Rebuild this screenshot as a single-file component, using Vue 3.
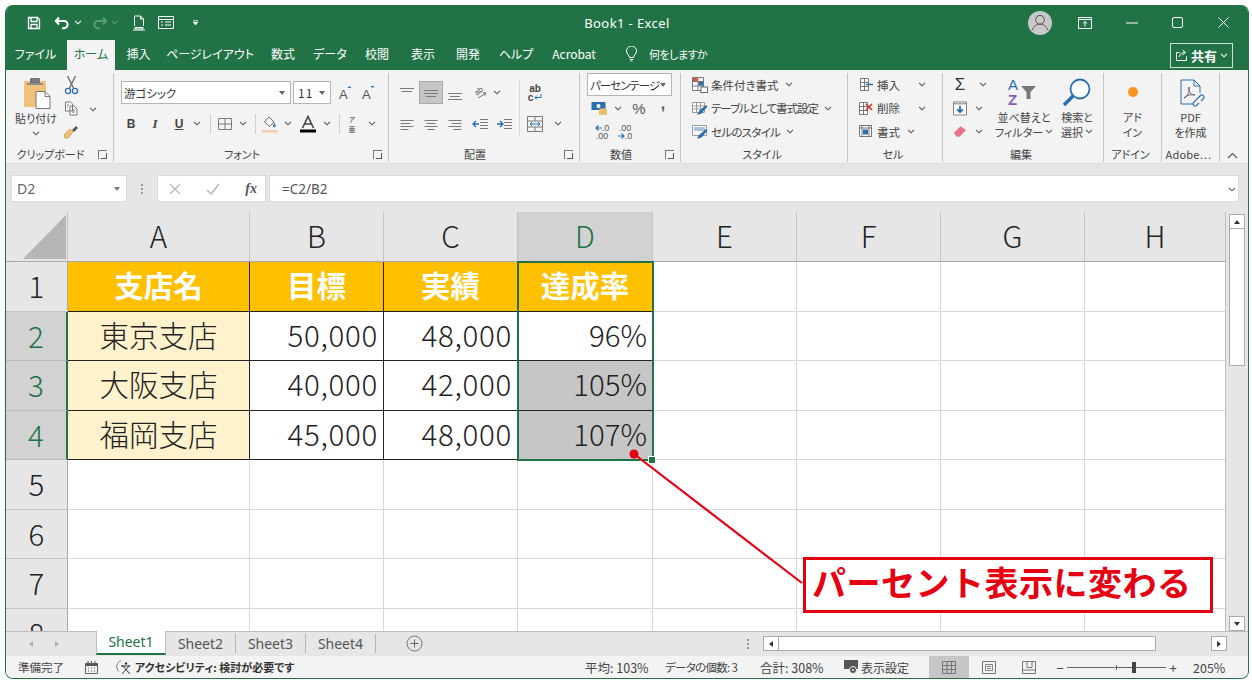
<script setup>
import { h } from 'vue'

const Ic = (p) =>
  h('svg', { width: p.s || 16, height: p.s || 16, viewBox: `0 0 ${p.s || 16} ${p.s || 16}`, style: 'display:block' }, [
    h('path', { d: p.d, fill: p.f || 'none', stroke: p.c || '#7a7a7a', 'stroke-width': p.w || 1 })
  ])
Ic.inheritAttrs = false
const Chev = (p) =>
  h('svg', { width: 8, height: 5, viewBox: '0 0 8 5', style: 'display:block' }, [
    h('path', { d: 'M1 .8l3 3 3-3', fill: 'none', stroke: p.c || '#555', 'stroke-width': 1.1 })
  ])

const tabs = [
  { t: 'ファイル', w: 61 },
  { t: 'ホーム', w: 48, on: true },
  { t: '挿入', w: 47 },
  { t: 'ページレイアウト', w: 96 },
  { t: '数式', w: 50 },
  { t: 'データ', w: 44 },
  { t: '校閲', w: 50 },
  { t: '表示', w: 42 },
  { t: '開発', w: 48 },
  { t: 'ヘルプ', w: 48 },
  { t: 'Acrobat', w: 68 }
]
const cols = ['A', 'B', 'C', 'D', 'E', 'F', 'G', 'H']
const data = {
  1: ['支店名', '目標', '実績', '達成率'],
  2: ['東京支店', '50,000', '48,000', '96%'],
  3: ['大阪支店', '40,000', '42,000', '105%'],
  4: ['福岡支店', '45,000', '48,000', '107%']
}
const rows = [1, 2, 3, 4, 5, 6, 7, 8]
function cellClass(r, c) {
  const inT = r <= 4 && c <= 3
  return {
    tb: inT,
    head: r === 1 && c <= 3,
    name: r > 1 && r <= 4 && c === 0,
    num: r > 1 && r <= 4 && c > 0 && c <= 3,
    wide: r > 1 && r <= 4 && (c === 1 || c === 2),
    dark: (r === 3 || r === 4) && c === 3
  }
}
</script>

<template>
  <div class="page">
    <div class="win">
      <!-- title bar -->
      <div class="title">
        <div class="qat">
          <span class="c w20"><svg width="14" height="14" viewBox="0 0 14 14"><path d="M1.500 1.500h9l2 2v9h-11zM4 1.500v4h6v-4M4 12.500v-4h6v4" fill="none" stroke="#fff" stroke-width="1.300"/></svg></span>
          <span class="w8"></span>
          <span class="c w20"><svg width="16" height="14" viewBox="0 0 16 14"><path d="M5 1.500L1.800 5 5 8.500M2 5h8a3.600 3.600 0 0 1 0 7.200H8" fill="none" stroke="#fff" stroke-width="2"/></svg></span>
          <span class="c w12"><Chev c="#fff" /></span>
          <span class="w6"></span>
          <span class="c w20"><svg width="16" height="14" viewBox="0 0 16 14"><path d="M11 1.500L14.200 5 11 8.500M14 5H6a3.600 3.600 0 0 0 0 7.200h2" fill="none" stroke="#5d9a78" stroke-width="2"/></svg></span>
          <span class="c w10"><Chev c="#5d9a78" /></span>
          <span class="c w38"><svg width="14" height="16" viewBox="0 0 14 16"><path d="M2.500 11V1h6l3 3v7M8.500 1v3h3M1 15h12M3 12.500h8v1.500H3z" fill="none" stroke="#fff"/></svg></span>
          <span class="c w16"><svg width="16" height="13" viewBox="0 0 16 13"><path d="M.500.500h15v12H.500zM.500 3.500h15M3 6h2M3 9h2M7 6h6M7 9h6" fill="none" stroke="#fff"/></svg></span>
          <span class="c w42"><svg width="7" height="7" viewBox="0 0 7 7"><path d="M1 1.500h5M1 3l2.500 3L6 3z" fill="#fff" stroke="#fff" stroke-width=".6"/></svg></span>
        </div>
        <div class="ttl">Book1  -  Excel</div>
        <div class="winbtns">
          <span class="avatar"><svg width="24" height="24" viewBox="0 0 24 24"><circle cx="12" cy="8.800" r="4.400" fill="none" stroke="#555"/><path d="M4.500 19c1-4 4-5.800 7.500-5.800s6.500 1.800 7.500 5.800" fill="none" stroke="#555"/></svg></span>
          <span class="c w46"><svg width="14" height="12" viewBox="0 0 14 12"><path d="M.500.500h13v11H.500zM.500 2.500h13M7 9.500V4.500M5 6.500l2-2 2 2" fill="none" stroke="#fff"/></svg></span>
          <span class="c w48"><svg width="12" height="2" viewBox="0 0 12 2"><path d="M0 1h12" stroke="#fff"/></svg></span>
          <span class="c w42"><svg width="11" height="11" viewBox="0 0 11 11"><rect x=".5" y=".5" width="10" height="10" rx="1.500" fill="none" stroke="#fff"/></svg></span>
          <span class="c w50"><svg width="11" height="11" viewBox="0 0 11 11"><path d="M.500.500l10 10M10.500.500l-10 10" stroke="#fff"/></svg></span>
        </div>
      </div>

      <!-- tabs -->
      <div class="tabs">
        <span v-for="tb in tabs" :key="tb.t" class="tab" :class="{ on: tb.on }" :style="{ width: tb.w + 'px' }">{{ tb.t }}</span>
        <span class="search">
          <svg width="13" height="16" viewBox="0 0 13 16"><path d="M4.500 11.500c0-2-3-3.500-3-6.500a5 5 0 0 1 10 0c0 3-3 4.500-3 6.500zM4.800 13.500h3.400M5.500 15h2" fill="none" stroke="#fff"/></svg>
          <span class="srch">何をしますか</span>
        </span>
        <span class="share">
          <svg width="13" height="13" viewBox="0 0 13 13"><path d="M4.500 3.500H1.500v8h10v-4M4 8c1-3 3-4.500 5.500-4.500M7.500 1l3 2.500-3 2.500" fill="none" stroke="#fff"/></svg>
          <b>共有</b>
          <Chev c="#fff" />
        </span>
      </div>

      <!-- ribbon -->
      <div class="ribbon">
        <!-- clipboard -->
        <section class="grp g-clip">
          <div class="body flexrow">
            <div class="paste">
              <svg class="pasteic" width="30" height="34" viewBox="0 0 30 34"><rect x="1" y="5" width="22" height="26" rx="1" fill="#eec27a"/><rect x="7" y="2" width="10" height="6" rx="1" fill="#777"/><rect x="4" y="7" width="16" height="2" fill="#8a8a8a"/><path d="M13 15.500h9l5 5v12H13z" fill="#fff" stroke="#777"/><path d="M22 15.500v5h5" fill="none" stroke="#777"/></svg>
              <span class="tiny">貼り付け</span>
              <span class="chevline"><Chev /></span>
            </div>
            <div class="smcol">
              <span class="rowc"><svg width="15" height="20" viewBox="0 0 15 20"><path d="M3.500 1l6 12M11.500 1l-6 12" stroke="#666" stroke-width="1.300" fill="none"/><circle cx="4" cy="16" r="2.600" fill="none" stroke="#2a6fb0" stroke-width="1.300"/><circle cx="11" cy="16" r="2.600" fill="none" stroke="#2a6fb0" stroke-width="1.300"/></svg></span>
              <span class="rowc"><svg width="14" height="15" viewBox="0 0 14 15"><path d="M1.500 1h5l2 2v7h-7zM6 5h4l3 3v6H6zM3 4h2M3 6h1M8 9h3M8 11h3" fill="#fff" stroke="#777"/></svg></span>
              <span class="rowc"><svg width="16" height="15" viewBox="0 0 16 15"><path d="M1 11l6-6 3 3-5 6H2z" fill="#eec27a" stroke="#d9a84e"/><path d="M9 6l4-4 2 2-4 4z" fill="#555"/></svg></span>
            </div>
            <span class="c w20"><Chev /></span>
          </div>
          <div class="lab"><span>クリップボード</span><i class="launch"></i></div>
        </section>

        <!-- font -->
        <section class="grp g-font">
          <div class="body two">
            <div class="tr pl7">
              <span class="combo fname">游ゴシック<em></em></span>
              <span class="combo fsize">11<em></em></span>
              <span class="w3"></span>
              <span class="c w23"><svg width="16" height="16" viewBox="0 0 16 16"><text x="1" y="14" font-size="13" font-family="Liberation Sans" fill="#555">A</text><path d="M9.500 3l2-2 2 2z" fill="#2a6fb0"/></svg></span>
              <span class="c w23"><svg width="16" height="16" viewBox="0 0 16 16"><text x="1" y="14" font-size="13" font-family="Liberation Sans" fill="#555">A</text><path d="M9.500 1h4l-2 2z" fill="#2a6fb0"/></svg></span>
            </div>
            <div class="tr pl5">
              <span class="c w24 fb">B</span>
              <span class="c w24 fi">I</span>
              <span class="c w24 fu">U</span>
              <span class="c w12"><Chev /></span>
              <span class="c w14"><i class="vs"></i></span>
              <span class="c w16"><Ic d="M1.500 2.500h13v11h-13zM8 2.500v11M1.500 8h13" /></span>
              <span class="c w20"><Chev /></span>
              <span class="c w4"><i class="vs"></i></span>
              <span class="c w26"><svg width="18" height="18" viewBox="0 0 18 18"><path d="M8 2l5 5-4.500 4.500L3.500 7z" fill="#fff" stroke="#666"/><path d="M13 7.500c1 1.500 1.800 2.500 1.800 3.300a1.300 1.300 0 0 1-2.600 0c0-.8.800-1.800.8-3.300z" fill="#2a6fb0"/><rect x="1" y="15" width="16" height="2.500" fill="#f6c9b0"/></svg></span>
              <span class="c w10"><Chev /></span>
              <span class="c w30"><svg width="18" height="18" viewBox="0 0 18 18"><path d="M3.500 13L9 1.500 14.500 13M5.500 9h7" fill="none" stroke="#444" stroke-width="1.600"/><rect x="1" y="14.500" width="16" height="3" fill="#000"/></svg></span>
              <span class="c w8"><Chev /></span>
              <span class="c w16"><i class="vs"></i></span>
              <span class="c w10 phon"><small>ア</small><small>亜</small></span>
              <span class="c w30"><Chev /></span>
            </div>
          </div>
          <div class="lab"><span>フォント</span><i class="launch"></i></div>
        </section>

        <!-- align -->
        <section class="grp g-align">
          <div class="body two">
            <div class="tr pl6">
              <span class="c w24"><Ic d="M1 3.500h14M3 6.500h10" /></span>
              <span class="c w24 sel"><Ic d="M1 5.500h14M1 8.500h14M3 11.500h10" /></span>
              <span class="c w24"><Ic d="M1 8.500h14M3 11.500h10M1 14.500h14" /></span>
              <span class="c w26"><svg width="18" height="16" viewBox="0 0 18 16"><text x="5" y="10" font-size="8" font-family="Liberation Sans" fill="#555" transform="rotate(-45 7 9)">ab</text><path d="M7 13l8-5M15 8l-3-.5M15 8l-1.500 3" fill="none" stroke="#777"/></svg></span>
              <span class="c w8"><Chev /></span>
              <span class="w19"></span>
              <span class="c w30 wrap"><span>ab</span><span class="wrap2">c<svg width="9" height="8" viewBox="0 0 9 8"><path d="M8 1v3.500H2M4 2.500l-2 2 2 2" fill="none" stroke="#2a6fb0"/></svg></span></span>
            </div>
            <div class="tr pl6">
              <span class="c w24"><Ic d="M1.500 4.500h13M1.500 7.500h10M1.500 10.500h13M1.500 13.500h8" /></span>
              <span class="c w24"><Ic d="M1.500 4.500h13M3.500 7.500h9M1.500 10.500h13M4.500 13.500h7" /></span>
              <span class="c w24"><Ic d="M1.500 4.500h13M4.500 7.500h10M1.500 10.500h13M6.500 13.500h8" /></span>
              <span class="c w25"><svg width="16" height="16" viewBox="0 0 16 16"><path d="M8 3.500h8M8 6.500h8M8 9.500h8M8 12.500h8" stroke="#7a7a7a"/><path d="M7 8H1M4 5L1 8l3 3" fill="none" stroke="#2a6fb0" stroke-width="1.400"/></svg></span>
              <span class="c w24"><svg width="16" height="16" viewBox="0 0 16 16"><path d="M8 3.500h8M8 6.500h8M8 9.500h8M8 12.500h8" stroke="#7a7a7a"/><path d="M1 8h6M4 5l3 3-3 3" fill="none" stroke="#2a6fb0" stroke-width="1.400"/></svg></span>
              <span class="c w4"></span>
              <span class="c w30"><svg width="16" height="16" viewBox="0 0 16 16"><path d="M.500.500h15v15H.500zM.500 5h15M.500 11h15M8 .500V5M8 11v4.500" fill="none" stroke="#7a7a7a"/><path d="M3 8h10M5 6L3 8l2 2M11 6l2 2-2 2" fill="none" stroke="#2a6fb0"/></svg></span>
              <span class="c w16"><Chev /></span>
            </div>
          </div>
          <div class="lab"><span>配置</span><i class="launch"></i></div>
        </section>

        <!-- number -->
        <section class="grp g-num">
          <div class="body">
            <div class="combo nform"><span class="nftext">パーセンテージ</span><em></em></div>
            <div class="nrow">
              <span class="c w24"><svg width="18" height="16" viewBox="0 0 18 16"><rect x=".5" y="1" width="14" height="8" fill="#2a6fb0"/><circle cx="7.500" cy="5" r="2" fill="#fff"/><ellipse cx="12" cy="9" rx="4" ry="1.700" fill="#e8bf6a"/><rect x="8" y="9" width="8" height="5" fill="#e8bf6a"/></svg></span>
              <span class="c w12"><Chev /></span>
              <span class="c w30 pct">%</span>
              <span class="c w18 comma">,</span>
            </div>
            <div class="nrow">
              <span class="c w28 dec"><span class="decl"><svg width="7" height="6" viewBox="0 0 7 6"><path d="M7 3H1M3.500.500L1 3l2.500 2.500" fill="none" stroke="#2a6fb0" stroke-width="1.200"/></svg>.0</span><span class="decl">.00</span></span>
              <span class="c w18 dec"><span class="decl">.00</span><span class="decl"><svg width="7" height="6" viewBox="0 0 7 6"><path d="M0 3h6M3.500.500L6 3 3.500 5.500" fill="none" stroke="#2a6fb0" stroke-width="1.200"/></svg>.0</span></span>
            </div>
          </div>
          <div class="lab"><span>数値</span><i class="launch"></i></div>
        </section>

        <!-- styles -->
        <section class="grp g-style">
          <div class="body">
            <div class="txtrow">
              <svg width="16" height="16" viewBox="0 0 16 16"><path d="M.500.500h11v13h-11zM.500 4.500h11M.500 9h11M6 .500v13" fill="#fff" stroke="#777"/><rect x="1" y="1" width="4.500" height="3.500" fill="#d9534f"/><rect x="6.500" y="5" width="4.500" height="3.500" fill="#2a6fb0"/><rect x="9" y="10" width="6.500" height="5.500" fill="#fff" stroke="#666"/></svg>
              <span>条件付き書式</span><Chev />
            </div>
            <div class="txtrow">
              <svg width="16" height="16" viewBox="0 0 16 16"><path d="M.500 2.500h12v10h-12zM.500 6h12M.500 9h12M4.500 2.500v10M8.500 2.500v10" fill="#fff" stroke="#999"/><path d="M5 15l2-4 7-6 1.500 1.500-6 7z" fill="#2a6fb0"/></svg>
              <span class="ts2">テーブルとして書式設定</span><Chev />
            </div>
            <div class="txtrow">
              <svg width="16" height="16" viewBox="0 0 16 16"><path d="M.500 1.500h14v10H.500z" fill="#fff" stroke="#999"/><rect x="2" y="3" width="11" height="4" fill="#a9c4e2"/><path d="M5 15l2-4 7-6 1.500 1.500-6 7z" fill="#2a6fb0"/></svg>
              <span class="ts3">セルのスタイル</span><Chev />
            </div>
          </div>
          <div class="lab ctr"><span>スタイル</span></div>
        </section>

        <!-- cells -->
        <section class="grp g-cell">
          <div class="body">
            <div class="txtrow cellrow">
              <svg width="15" height="15" viewBox="0 0 15 15"><path d="M2.500 1.500h8v12h-8zM2.500 5.500h8M2.500 9.500h8M6.500 1.500v12" fill="#fff" stroke="#777"/><path d="M8 7.500h7" stroke="#2a6fb0" stroke-width="1.400"/></svg>
              <span class="cellt">挿入</span><span class="sp1"></span><Chev />
            </div>
            <div class="txtrow cellrow">
              <svg width="15" height="15" viewBox="0 0 15 15"><path d="M1.500 1.500h8v12h-8zM1.500 5.500h8M1.500 9.500h8M5.500 1.500v12" fill="#fff" stroke="#777"/><path d="M8 3l6 6M14 3L8 9" stroke="#d9342b" stroke-width="1.600"/></svg>
              <span class="cellt">削除</span><span class="sp1"></span><Chev />
            </div>
            <div class="txtrow cellrow">
              <svg width="15" height="15" viewBox="0 0 15 15"><path d="M1.500 1.500h12v11h-12zM1.500 4h12M4 1.500v11M11 1.500v11" fill="#fff" stroke="#777"/><rect x="5" y="5.500" width="5" height="5" fill="#2a6fb0"/></svg>
              <span class="cellt">書式</span><Chev />
            </div>
          </div>
          <div class="lab ctr"><span>セル</span></div>
        </section>

        <!-- edit -->
        <section class="grp g-edit">
          <div class="body flexrow">
            <div class="editcol">
              <span class="rowc"><span class="c w14 sigma">Σ</span><span class="c w16l"><Chev /></span></span>
              <span class="rowc"><span class="c w14"><svg width="15" height="15" viewBox="0 0 15 15"><path d="M.500.500h14v14H.500z" fill="#fff" stroke="#777"/><path d="M.500 2.500h14" stroke="#777"/><path d="M7.500 4.500v7M4.500 8.500l3 3 3-3" fill="none" stroke="#2a6fb0" stroke-width="2"/></svg></span><span class="c w16s"><Chev /></span></span>
              <span class="rowc"><span class="c w14"><svg width="15" height="13" viewBox="0 0 15 13"><path d="M1 8l7-7 6 4-7 7H4z" fill="#e2758d"/></svg></span><span class="c w16s"><Chev /></span></span>
            </div>
            <div class="bigbtn b-sort">
              <svg width="36" height="30" viewBox="0 0 36 30"><text x="2" y="13" font-size="15" font-family="Liberation Sans" fill="#2a6fb0">A</text><text x="2" y="28" font-size="15" font-family="Liberation Sans" fill="#8e5bb5" font-weight="700">Z</text><path d="M15 9h15l-5.500 6v7h-4v-7z" fill="#777"/></svg>
              <span>並べ替えと</span>
              <span>フィルター <Chev class="inl" /></span>
            </div>
            <div class="bigbtn b-find">
              <svg width="32" height="30" viewBox="0 0 32 30"><circle cx="19" cy="12" r="9.500" fill="#fff" stroke="#2a6fb0" stroke-width="1.800"/><path d="M12 19L3 28" stroke="#2a6fb0" stroke-width="3.500"/></svg>
              <span>検索と</span>
              <span>選択 <Chev class="inl" /></span>
            </div>
          </div>
          <div class="lab ctr"><span>編集</span></div>
        </section>

        <!-- addin -->
        <section class="grp g-add">
          <div class="body">
            <div class="bigbtn">
              <svg width="32" height="30" viewBox="0 0 32 30"><circle cx="16" cy="15" r="5" fill="#f7931e"/></svg>
              <span>アド</span>
              <span>イン</span>
            </div>
          </div>
          <div class="lab ctr"><span>アドイン</span></div>
        </section>

        <!-- adobe -->
        <section class="grp g-pdf">
          <div class="body">
            <div class="bigbtn">
              <svg width="32" height="30" viewBox="0 0 32 30"><path d="M6 14V3h13l6 6v7M6 14v13h12" fill="none" stroke="#2a6fb0"/><path d="M19 3v6h6" fill="none" stroke="#2a6fb0"/><path d="M9 21c3-1 6-6 5-11-1 5 2 8 6 8-3-1-8 0-11 3z" fill="none" stroke="#555" stroke-width=".9"/><path d="M20 24l6-6a2.500 2.500 0 0 1 3 3l-3 3M23 21l-5 5a2.500 2.500 0 0 0 3 3l3-3" fill="none" stroke="#2a6fb0" stroke-width="1.200"/></svg>
              <span>PDF</span>
              <span>を作成</span>
            </div>
          </div>
          <div class="lab ctr"><span class="ado">Adobe⋯</span></div>
        </section>

        <div class="collapse"><svg width="11" height="7" viewBox="0 0 11 7"><path d="M1 6l4.500-4.500L10 6" fill="none" stroke="#555" stroke-width="1.100"/></svg></div>
      </div>

      <!-- formula bar -->
      <div class="fbar">
        <div class="box namebox"><span>D2</span><em></em></div>
        <div class="dots"><i></i><i></i><i></i></div>
        <div class="box fxbox">
          <svg width="12" height="12" viewBox="0 0 12 12"><path d="M1 1l10 10M11 1L1 11" stroke="#b5b5b5" stroke-width="1.200"/></svg>
          <svg width="14" height="12" viewBox="0 0 14 12"><path d="M1 7l4 4 8-10" fill="none" stroke="#b5b5b5" stroke-width="1.400"/></svg>
          <span class="fx">fx</span>
        </div>
        <div class="box formula"><span>=C2/B2</span><Chev class="fchev" /></div>
      </div>

      <!-- sheet -->
      <div class="sheet">
        <div class="grid">
          <div class="corner"><svg width="62" height="49" viewBox="0 0 62 49"><path d="M60 3v44H17z" fill="#b5b5b5"/></svg></div>
          <div v-for="(c, i) in cols" :key="c" class="ch" :class="{ act: i === 3 }">{{ c }}</div>
          <template v-for="r in rows" :key="r">
            <div class="rh" :class="{ act: r >= 2 && r <= 4 }">{{ r }}</div>
            <div v-for="(c, i) in cols" :key="c + r" class="cell" :class="cellClass(r, i)">{{ data[r] ? data[r][i] : '' }}</div>
          </template>
          <i class="selbox"></i>
          <i class="handle"></i>
        </div>
        <div class="vbar">
          <div class="sb-btn"><i class="tri up"></i></div>
          <div class="sb-thumb"></div>
          <div class="sb-fill"></div>
          <div class="sb-btn"><i class="tri down"></i></div>
        </div>
        <svg class="arrow" width="190" height="150" viewBox="0 0 190 150"><circle cx="5" cy="5" r="4.500" fill="#e60012"/><path d="M5 5L173 134" stroke="#e60012" stroke-width="2.200"/></svg>
        <div class="callout">パーセント表示に変わる</div>
      </div>

      <!-- sheet tabs -->
      <div class="stabs">
        <span class="nav"><i class="tri left lite"></i></span>
        <span class="nav"><i class="tri right lite"></i></span>
        <span class="st on">Sheet1</span>
        <span class="st">Sheet2</span>
        <span class="st">Sheet3</span>
        <span class="st">Sheet4</span>
        <span class="plus"><svg width="17" height="17" viewBox="0 0 17 17"><circle cx="8.500" cy="8.500" r="7.500" fill="none" stroke="#777"/><path d="M8.500 4.500v8M4.500 8.500h8" stroke="#666"/></svg></span>
        <span class="hdots"><i></i><i></i><i></i></span>
        <div class="hscroll">
          <span class="sb-h"><i class="tri left"></i></span>
          <span class="hthumb"></span>
          <span class="htrack"></span>
          <span class="sb-h"><i class="tri right"></i></span>
        </div>
      </div>

      <!-- status -->
      <div class="status">
        <span class="s1">準備完了</span>
        <span class="s2"><svg width="13" height="13" viewBox="0 0 13 13"><path d="M.500 2.500h12v10H.500z" fill="none" stroke="#666"/><path d="M.500 2.500h12V5H.500z" fill="#555"/><path d="M3 0v2M6.500 0v2M10 0v2M3 7h1M6 7h1M9 7h1M3 10h1M6 10h1M9 10h1" stroke="#555"/></svg></span>
        <span class="s3"><svg width="16" height="16" viewBox="0 0 16 16"><path d="M5 1.500a6.500 6.500 0 0 0-2 11" fill="none" stroke="#777"/><path d="M5 7h9M6 6l8 9M14 6l-8 9" fill="none" stroke="#333"/><circle cx="10" cy="4.500" r="1.200" fill="#333"/></svg></span>
        <b class="s4">アクセシビリティ: 検討が必要です</b>
        <span class="fill"></span>
        <span class="m1">平均: 103%</span>
        <span class="m2">データの個数: 3</span>
        <span class="m3">合計: 308%</span>
        <span class="dset">
          <svg width="16" height="15" viewBox="0 0 16 15"><rect x="0" y="0" width="14" height="9" fill="#555"/><circle cx="9" cy="10" r="3.500" fill="#555" stroke="#f3f3f3"/><circle cx="9" cy="10" r="1" fill="#f3f3f3"/></svg>
          <span>表示設定</span>
        </span>
        <span class="vw vwon"><svg width="14" height="13" viewBox="0 0 14 13"><path d="M.500.500h13v12H.500zM.500 4.500h13M.500 8.500h13M5 .500v12M9.500.500v12" fill="none" stroke="#777"/></svg></span>
        <span class="vw"><svg width="14" height="13" viewBox="0 0 14 13"><path d="M.500.500h13v12H.500z" fill="none" stroke="#777"/><path d="M3.500 3.500h7v6h-7zM5 5.500h4M5 7.500h4" fill="none" stroke="#888"/></svg></span>
        <span class="vw"><svg width="14" height="13" viewBox="0 0 14 13"><path d="M.500.500h13v12H.500zM5 .500v6h5V.500M.500 9h13" fill="none" stroke="#777"/></svg></span>
        <span class="zoom">
          <span class="zm">−</span>
          <span class="slider"><i class="tick"></i><i class="knob"></i></span>
          <span class="zm">+</span>
        </span>
        <span class="zv">205%</span>
      </div>
    </div>
  </div>
</template>

<style>
html, body { margin: 0; background: #fff; }
</style>

<style scoped>
* { box-sizing: border-box; }
.page {
  width: 1252px; height: 685px; padding: 5px 3px 6px 5px; background: #fff;
  font-family: "Noto Sans CJK JP", "Noto Sans", sans-serif;
  font-feature-settings: "palt"; color: #444; overflow: hidden;
}
.win {
  width: 1244px; height: 674px; display: flex; flex-direction: column;
  border: 1px solid #217346; border-top: 0; border-radius: 8px; overflow: hidden; background: #e6e6e6; position: relative;
}
.c { display: flex; align-items: center; justify-content: center; flex: none; }
.w3 { width: 3px; flex: none; } .w4 { width: 4px; } .w6 { width: 6px; flex: none; } .w8 { width: 8px; flex: none; }
.w10 { width: 10px; } .w12 { width: 12px; } .w14 { width: 14px; } .w16 { width: 16px; } .w18 { width: 18px; } .w19 { width: 19px; flex: none; }
.w20 { width: 20px; } .w23 { width: 23px; } .w24 { width: 24px; } .w25 { width: 25px; } .w26 { width: 26px; }
.w28 { width: 28px; } .w30 { width: 30px; } .w38 { width: 38px; } .w42 { width: 42px; } .w46 { width: 46px; } .w48 { width: 48px; } .w50 { width: 50px; }

.title { height: 35px; background: #217346; color: #fff; display: grid; grid-template-columns: 1fr auto 1fr; align-items: center; }
.qat { display: flex; align-items: center; padding-left: 18px; }
.ttl { font-size: 13px; letter-spacing: .4px; white-space: pre; font-family: "Noto Sans", sans-serif; }
.winbtns { display: flex; align-items: center; justify-content: flex-end; }
.avatar { width: 24px; height: 24px; border-radius: 50%; background: #c8c8c8; margin-right: 10px; display: block; }

.tabs { height: 30px; background: #217346; display: flex; align-items: stretch; color: #fff; font-size: 12px; }
.tab { display: flex; align-items: center; justify-content: center; padding-bottom: 3px; flex: none; white-space: nowrap; }
.tab:first-child { padding-right: 2px; }
.tab.on { background: #f3f3f3; color: #217346; }
.search { display: flex; align-items: center; gap: 11px; margin-left: 17px; padding-bottom: 3px; }
.srch { font-size: 11px; letter-spacing: -.5px; }
.share {
  margin: 3px 15px 2px auto; width: 63px; border: 1px solid #cfe0d6; display: flex; align-items: center; justify-content: center; gap: 3px;
  font-size: 13px;
}
.share b { font-weight: 700; }

.ribbon { height: 94px; background: #f3f3f3; display: flex; padding-top: 3px; border-bottom: 1px solid #dcdcdc; }
.grp { flex: none; display: flex; flex-direction: column; position: relative; height: 89px; border-right: 1px solid #c6c6c6; }
.g-clip { width: 108px; } .g-font { width: 275px; } .g-align { width: 191px; } .g-num { width: 101px; }
.g-style { width: 167px; } .g-cell { width: 95px; } .g-edit { width: 161px; } .g-add { width: 58px; } .g-pdf { width: 58px; }
.body { height: 72px; }
.flexrow { display: flex; }
.two { padding-top: 8px; display: flex; flex-direction: column; gap: 8px; }
.lab { height: 16px; margin-top: 2px; display: flex; align-items: center; font-size: 11px; color: #444; padding-right: 4px; }
.lab span { flex: 1; text-align: center; white-space: nowrap; }
.launch { width: 14px; height: 10px; flex: none; display: block; position: relative; }
.launch::before { content: ""; position: absolute; left: 3px; top: 1px; width: 8px; height: 8px; border-left: 1px solid #777; border-top: 1px solid #777; }
.launch::after { content: ""; position: absolute; left: 6px; top: 4px; width: 5px; height: 5px; border-right: 1px solid #555; border-bottom: 1px solid #555; }

.paste { width: 46px; margin-left: 7px; display: flex; flex-direction: column; align-items: center; padding-top: 3px; }
.pasteic { margin-left: 4px; display: block; }
.tiny { font-size: 11px; line-height: 14px; margin-top: 1px; white-space: nowrap; color: #444; }
.chevline { margin-top: 6px; }
.smcol { width: 24px; display: flex; flex-direction: column; }
.rowc { height: 23.500px; display: flex; align-items: center; justify-content: center; }
.g-clip .w20 { margin-top: 26px; height: 20px; }

.tr { display: flex; align-items: center; height: 23px; }
.pl5 { padding-left: 5px; } .pl6 { padding-left: 6px; } .pl7 { padding-left: 7px; }
.combo { display: flex; align-items: center; height: 23px; background: #fff; border: 1px solid #b5b5b5; font-size: 11.500px; color: #333; padding-left: 2px; position: relative; flex: none; white-space: nowrap; }
.combo em { position: absolute; right: 5px; top: 9px; border: 3px solid transparent; border-top: 4px solid #666; border-bottom: 0; }
.fname { width: 170px; margin-right: 2px; }
.fsize { width: 38px; padding-left: 4px; font-size: 12px; letter-spacing: 1px; }
.fb { font-family: "Liberation Sans", sans-serif; font-weight: 700; font-size: 12px; color: #444; }
.fi { font-family: "Liberation Serif", serif; font-style: italic; font-weight: 700; font-size: 13px; color: #444; }
.fu { font-family: "Liberation Sans", sans-serif; font-weight: 700; font-size: 12px; color: #444; text-decoration: underline; }
.vs { display: block; width: 1px; height: 20px; background: #d0d0d0; }
.phon { flex-direction: column; }
.phon small { font-size: 7px; line-height: 10px; height: 10px; color: #444; }
.sel { height: 23px; background: #c6c6c6; border: 1px solid #aaa; }
.g-align .two { position: relative; }
.g-align .two::after { content: ""; position: absolute; left: 130px; top: 8px; width: 1px; height: 54px; background: #d6d6d6; }
.wrap { flex-direction: column; font-size: 10px; line-height: 9px; color: #444; font-family: "Liberation Sans", sans-serif; font-weight: 700; }
.wrap2 { display: flex; align-items: center; }

.g-num .body { padding-left: 7px; }
.nform { width: 85px; font-size: 11.500px; }
.nftext { letter-spacing: -1px; }
.nrow { display: flex; align-items: center; height: 23.500px; padding-left: 1px; }
.nrow:nth-child(2) { margin-top: 1px; }
.pct { font-size: 15px; color: #555; font-family: "Liberation Sans", sans-serif; }
.comma { font-size: 16px; font-weight: 700; color: #555; padding-bottom: 10px; font-family: "Liberation Sans", sans-serif; }
.dec { flex-direction: column; font-family: "Liberation Sans", sans-serif; color: #555; }
.decl { font-size: 9px; line-height: 8px; display: flex; align-items: center; }

.g-style .body { padding-left: 11px; }
.txtrow { height: 23.500px; display: flex; align-items: center; font-size: 11.500px; color: #444; white-space: nowrap; gap: 3px; }
.txtrow span { margin-right: 3px; }
.ts2 { letter-spacing: -1px; }
.ts3 { letter-spacing: -.7px; }
.g-cell .body { padding-left: 10px; }
.cellrow { gap: 4px; }
.cellt { font-size: 11.500px; }
.sp1 { width: 4px; }
.editcol { width: 51px; padding-left: 10px; flex: none; }
.editcol .rowc { justify-content: flex-start; }
.w16l { width: 32px; }
.w16s { width: 24px; }
.sigma { font-size: 17px; color: #333; font-family: "Liberation Sans", sans-serif; }
.bigbtn { display: flex; flex-direction: column; align-items: center; font-size: 11px; line-height: 15px; white-space: nowrap; color: #444; padding-top: 4px; }
.bigbtn svg:first-child { margin-bottom: 3px; }
.bigbtn span { display: flex; align-items: center; gap: 2px; }
.b-sort { width: 60px; }
.b-find { width: 44px; margin-left: 1px; }
.ado { font-size: 11px; letter-spacing: .2px; }
.collapse { flex: 1; display: flex; justify-content: center; padding: 79px 0 0 0; }
.collapse svg { display: block; margin-right: 4px; }

.fbar { height: 48px; background: #e6e6e6; display: flex; padding: 11px 9px 10px 5px; }
.box { background: #fff; border: 1px solid #dadada; height: 27px; display: flex; align-items: center; font-size: 14px; color: #666; }
.namebox { width: 116px; padding-left: 5px; position: relative; font-family: "Noto Sans", sans-serif; }
.namebox em { position: absolute; right: 6px; top: 11px; border: 3px solid transparent; border-top: 4px solid #777; border-bottom: 0; }
.dots { width: 30px; display: flex; flex-direction: column; align-items: center; justify-content: center; gap: 2px; }
.dots i, .hdots i { display: block; width: 2px; height: 2px; background: #999; }
.fxbox { width: 109px; justify-content: space-between; padding: 0 8px 0 11px; margin-right: 3px; }
.fx { font-family: "Liberation Serif", serif; font-style: italic; font-weight: 700; font-size: 14px; color: #555; }
.formula { flex: 1; padding-left: 12px; position: relative; font-size: 13.500px; color: #555; font-family: "Noto Sans", sans-serif; }
.fchev { position: absolute; right: 2px; top: 11px; }

.sheet { height: 419px; position: relative; display: flex; background: #e6e6e6; overflow: hidden; }
.grid {
  width: 1220px; height: 419px; overflow: hidden; position: relative; flex: none;
  display: grid; grid-template-columns: 62px 182px 134px 134px 135px 144px 144px 144px 141px; grid-auto-rows: 49.500px;
  grid-template-rows: 50px; font-size: 29.500px; font-weight: 300; color: #222; border-right: 1px solid #bdbdbd;
}
.corner { background: #e6e6e6; border-right: 1px solid #c0c0c0; border-bottom: 1px solid #a8a8a8; }
.corner svg { display: block; }
.ch { display: flex; align-items: center; justify-content: center; background: #e6e6e6; border-right: 1px solid #c4c4c4; border-bottom: 1px solid #a8a8a8; padding-bottom: 3px; color: #222; }
.ch.act { background: #d2d2d2; color: #217346; }
.rh { display: flex; align-items: center; justify-content: center; background: #e6e6e6; border-right: 1px solid #a8a8a8; border-bottom: 1px solid #c4c4c4; padding-bottom: 2px; }
.rh.act { background: #d2d2d2; color: #217346; border-right: 2px solid #217346; border-bottom-color: #bbb; }
.cell { background: #fff; border-right: 1px solid #d8d8d8; border-bottom: 1px solid #d8d8d8; display: flex; align-items: center; padding-bottom: 4px; white-space: nowrap; }
.cell.tb { border-right-color: #222; border-bottom-color: #222; }
.cell.head { background: #ffc000; color: #fff; font-weight: 700; justify-content: center; font-feature-settings: normal; }
.cell.name { background: #fff2cc; justify-content: center; font-feature-settings: normal; }
.cell.num { justify-content: flex-end; padding-right: 5px; }
.cell.wide { letter-spacing: .7px; }
.cell.dark { background: #c6c6c6; }
.selbox { position: absolute; left: 511px; top: 49px; width: 137px; height: 200px; border: 2px solid #217346; z-index: 1; }
.handle { position: absolute; left: 642px; top: 244px; width: 6px; height: 6px; background: #217346; border: 1px solid #fff; box-sizing: content-box; z-index: 2; }

.vbar { width: 23px; flex: none; padding: 2px 4px 0 3px; display: flex; flex-direction: column; }
.sb-btn { height: 15px; background: #fff; border: 1px solid #aaa; display: flex; align-items: center; justify-content: center; flex: none; }
.sb-thumb { height: 137px; background: #fff; border: 1px solid #aaa; border-top: 0; flex: none; }
.sb-fill { flex: 1; }
.tri { display: block; width: 0; height: 0; border: 3.500px solid transparent; }
.tri.up { border-bottom: 4px solid #333; border-top: 0; }
.tri.down { border-top: 4px solid #333; border-bottom: 0; }
.tri.left { border-right: 4px solid #333; border-left: 0; }
.tri.right { border-left: 4px solid #333; border-right: 0; }
.tri.left.lite { border-right-color: #b0b0b0; }
.tri.right.lite { border-left-color: #b0b0b0; }

.arrow { position: absolute; left: 623px; top: 237px; z-index: 3; }
.callout {
  position: absolute; left: 797px; top: 345px; width: 410px; height: 56px; z-index: 4; background: #fff; border: 3px solid #e60012;
  color: #e60012; font-weight: 700; font-size: 34px; line-height: 44px; padding-left: 6px; white-space: nowrap; font-feature-settings: normal;
  letter-spacing: .5px;
}

.stabs { height: 25px; background: #e6e6e6; border-top: 1px solid #bdbdbd; display: flex; align-items: flex-start; font-size: 14px; color: #555; font-family: "Noto Sans", sans-serif; }
.nav { width: 26px; height: 24px; display: flex; align-items: center; justify-content: center; flex: none; }
.nav:first-child { margin-left: 12px; }
.st { width: 70px; height: 24px; display: flex; align-items: center; justify-content: center; border-right: 1px solid #b5b5b5; padding-bottom: 3px; flex: none; background-clip: padding-box; }
.st:not(.on) { height: 19px; margin-top: 2px; padding-bottom: 0; }
.st.on { margin-left: 26px; background: #fff; color: #217346; border-left: 1px solid #bdbdbd; border-right: 1px solid #bdbdbd; border-bottom: 2px solid #217346; height: 24px; margin-top: -1px; padding-top: 2px; }
.plus { margin-left: 30px; margin-top: 3px; display: block; flex: none; }
.hdots { margin-left: 317px; width: 16px; display: flex; flex-direction: column; align-items: center; gap: 2px; margin-top: 7px; flex: none; }
.hscroll { display: flex; align-items: center; margin-top: 4px; margin-left: 7px; flex: none; }
.sb-h { width: 16px; height: 15px; background: #fff; border: 1px solid #aaa; display: flex; align-items: center; justify-content: center; flex: none; }
.hthumb { width: 377px; height: 15px; background: #fff; border: 1px solid #aaa; border-left: 0; flex: none; }
.htrack { width: 55px; flex: none; }

.status { height: 22px; background: #f3f3f3; display: flex; align-items: center; font-size: 12.500px; color: #444; white-space: nowrap; }
.s1 { margin-left: 12px; width: 47px; flex: none; font-feature-settings: normal; font-size: 11.500px; }
.s2 { margin-left: 20px; display: block; flex: none; height: 13px; }
.s2 svg, .s3 svg { display: block; }
.s3 { margin-left: 18px; display: block; flex: none; height: 16px; }
.s4 { margin-left: 3px; font-size: 11px; font-weight: 700; color: #333; }
.fill { flex: 1; }
.m1 { width: 80px; flex: none; }
.m2 { width: 95px; flex: none; font-size: 11.500px; letter-spacing: -.7px; }
.m3 { width: 84px; flex: none; }
.dset { width: 85px; flex: none; display: flex; align-items: center; gap: 1px; font-size: 12px; }
.vw { width: 40px; height: 22px; flex: none; display: flex; align-items: center; justify-content: center; }
.vwon { background: #c6c6c6; }
.zoom { display: flex; align-items: center; margin-left: 3px; width: 129px; flex: none; }
.zm { width: 16px; text-align: center; font-size: 13px; flex: none; }
.slider { width: 99px; height: 1px; background: #666; position: relative; flex: none; margin: 0 -1px; }
.tick { position: absolute; left: 49px; top: -2px; width: 1px; height: 5px; background: #666; }
.knob { position: absolute; left: 65px; top: -5px; width: 4px; height: 11px; background: #444; }
.zv { width: 67px; flex: none; padding-left: 12px; font-size: 12.500px; font-feature-settings: normal; }
.inl { display: inline-block !important; }
</style>
